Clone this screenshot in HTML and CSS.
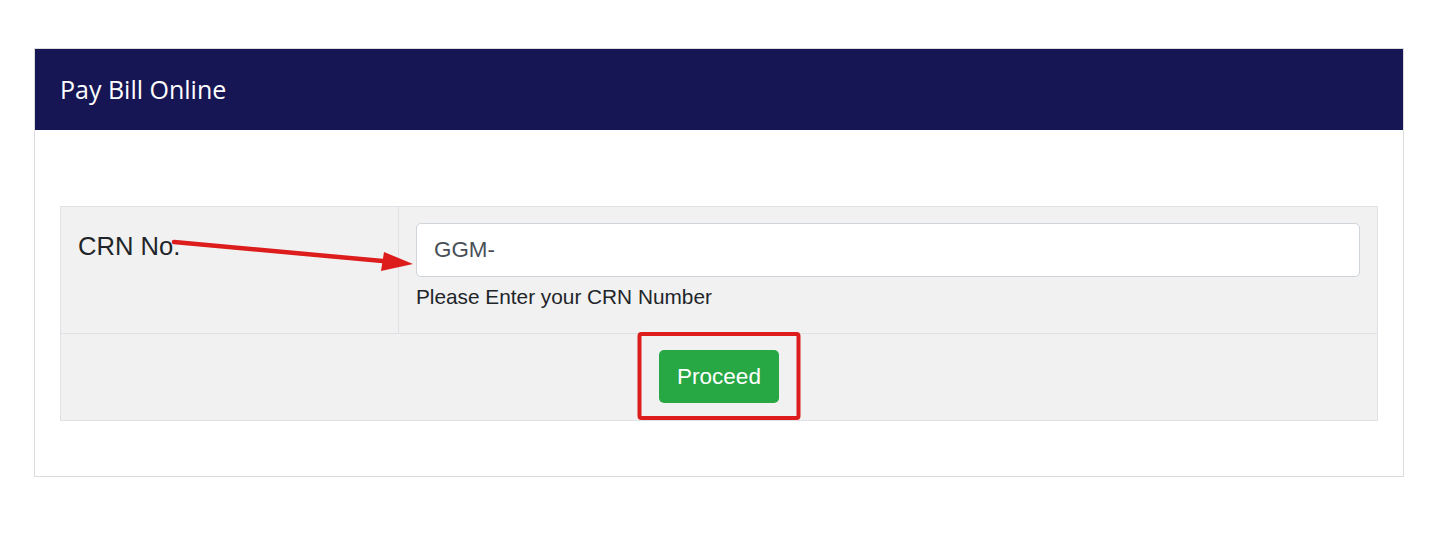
FILE: index.html
```html
<!DOCTYPE html>
<html>
<head>
<meta charset="utf-8">
<link rel="stylesheet" href="styles.css">
</head>
<body>
<div class="card">
  <div class="card-header">Pay Bill Online</div>
  <div class="card-body">
    <table class="form-table">
      <tr>
        <td class="label-cell"><span class="label">CRN No.</span></td>
        <td class="field-cell">
          <div class="input">GGM-</div>
          <div class="help">Please Enter your CRN Number</div>
        </td>
      </tr>
      <tr>
        <td class="action-cell" colspan="2"><button class="btn">Proceed</button></td>
      </tr>
    </table>
  </div>
</div>
<svg class="annot" width="1435" height="535" viewBox="0 0 1435 535">
  <line x1="174" y1="242" x2="388" y2="261.5" stroke="#dd1c1c" stroke-width="4.5" stroke-linecap="round"/>
  <polygon points="384,252 413,264 381,271" fill="#dd1c1c"/>
  <rect x="639.5" y="334" width="159" height="84" rx="2" fill="none" stroke="#dd1c1c" stroke-width="4"/>
</svg>
</body>
</html>
```
FILE: styles.css
```css
html, body {
  margin: 0;
  padding: 0;
  background: #ffffff;
}
body {
  position: relative;
  width: 1435px;
  height: 535px;
  overflow: hidden;
  font-family: "Liberation Sans", Arial, sans-serif;
  color: #212529;
}
.card {
  margin: 48px 0 0 34px;
  width: 1370px;
  border: 1px solid #dcdcdc;
  box-sizing: border-box;
}
.card-header {
  height: 81px;
  background: #171655;
  color: #ffffff;
  font-family: "Open Sans", sans-serif;
  font-size: 25px;
  display: flex;
  align-items: center;
  padding-left: 25px;
  padding-bottom: 2px;
  box-sizing: border-box;
}
.card-body {
  padding: 76px 25px 55px 25px;
}
.form-table {
  width: 100%;
  border-collapse: collapse;
  background: #f1f1f1;
}
.form-table td {
  border: 1px solid #dee2e6;
  vertical-align: top;
}
.label-cell {
  width: 338px;
  box-sizing: border-box;
  padding: 21px 17px 0 17px;
  height: 127px;
}
.label {
  font-size: 25.6px;
  line-height: 36px;
}
.field-cell {
  padding: 16px 17px 0 17px;
}
.input {
  height: 54px;
  box-sizing: border-box;
  background: #ffffff;
  border: 1px solid #ced4da;
  border-radius: 5px;
  padding-left: 17px;
  font-size: 22.4px;
  color: #495057;
  display: flex;
  align-items: center;
}
.help {
  font-size: 20.8px;
  margin-top: 8px;
  line-height: 24px;
}
.action-cell {
  text-align: center;
  height: 87px;
  box-sizing: border-box;
  padding-top: 16px;
}
.btn {
  background: #28a745;
  color: #ffffff;
  border: none;
  border-radius: 5px;
  width: 120px;
  height: 53px;
  font-family: "Liberation Sans", Arial, sans-serif;
  font-size: 22.5px;
  padding: 0;
}
.annot {
  position: absolute;
  left: 0;
  top: 0;
  pointer-events: none;
}
```
